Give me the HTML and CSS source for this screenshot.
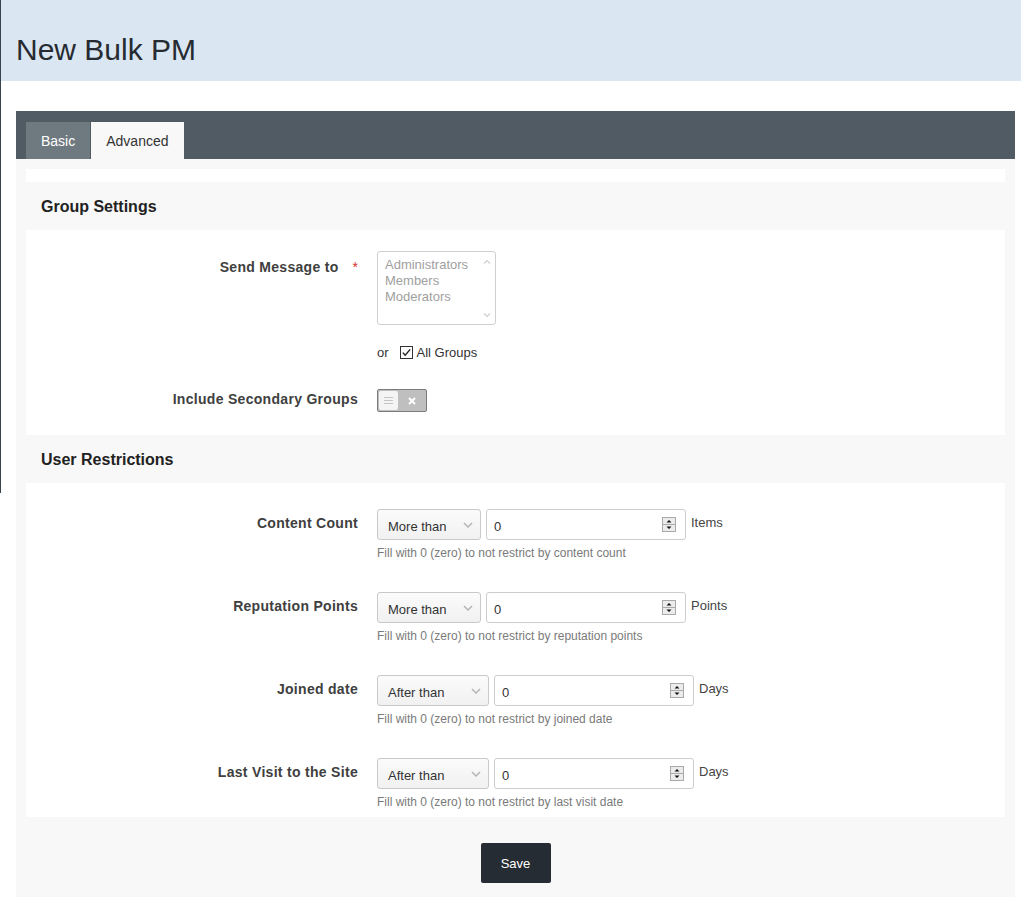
FILE: index.html
```html
<!DOCTYPE html>
<html lang="en">
<head>
<meta charset="utf-8">
<title>New Bulk PM</title>
<link rel="stylesheet" href="styles.css">
</head>
<body>
<div class="shell">
  <div class="rail"></div>
  <div class="main">
    <header class="page-head">
      <h1 class="page-title">New Bulk PM</h1>
    </header>

    <section class="panel">
      <div class="tabbar">
        <button class="tab">Basic</button>
        <button class="tab active">Advanced</button>
      </div>

      <div class="panel-body">
        <div class="strip"></div>

        <h2 class="sec-title">Group Settings</h2>
        <div class="sec sec-groups">
          <div class="row">
            <div class="lbl lbl-top">Send Message to<span class="req">*</span></div>
            <div class="ctrl">
              <div class="multiselect">
                <div class="ms-opts">
                  <div>Administrators</div>
                  <div>Members</div>
                  <div>Moderators</div>
                </div>
                <div class="ms-bar">
                  <svg width="8" height="5" viewBox="0 0 8 5"><path d="M1 4.5 L4 1.5 L7 4.5" fill="none" stroke="#cfcfcf" stroke-width="1.2"/></svg>
                  <svg width="8" height="5" viewBox="0 0 8 5"><path d="M1 0.5 L4 3.5 L7 0.5" fill="none" stroke="#cfcfcf" stroke-width="1.2"/></svg>
                </div>
              </div>
              <div class="or-line">
                <span class="or">or</span>
                <label class="chk">
                  <svg width="13" height="13" viewBox="0 0 13 13"><rect x="0.5" y="0.5" width="12" height="12" fill="#fff" stroke="#333"/><path d="M2.8 6.6 L5.2 9.2 L10.2 3.4" fill="none" stroke="#222" stroke-width="1.4"/></svg>
                  <span>All Groups</span>
                </label>
              </div>
            </div>
          </div>

          <div class="row row-gap">
            <div class="lbl">Include Secondary Groups</div>
            <div class="ctrl">
              <div class="toggle">
                <span class="knob">
                  <svg width="9" height="7" viewBox="0 0 9 7"><path d="M0 0.5 H9 M0 3.5 H9 M0 6.5 H9" stroke="#c4c4c4" stroke-width="1"/></svg>
                </span>
                <span class="toggle-off">
                  <svg width="8" height="8" viewBox="0 0 8 8"><path d="M1 1 L7 7 M7 1 L1 7" stroke="#fff" stroke-width="2"/></svg>
                </span>
              </div>
            </div>
          </div>
        </div>

        <h2 class="sec-title">User Restrictions</h2>
        <div class="sec sec-users">
          <div class="row">
            <div class="lbl lbl-field">Content Count</div>
            <div class="ctrl">
              <div class="ctrl-line">
                <div class="select sel-more"><span>More than</span>
                  <svg width="10" height="6" viewBox="0 0 10 6"><path d="M1 1 L5 5 L9 1" fill="none" stroke="#b5b5b5" stroke-width="1.5"/></svg>
                </div>
                <div class="num"><span>0</span>
                  <svg class="spin" width="14" height="15" viewBox="0 0 14 15"><rect x="0.5" y="0.5" width="13" height="14" fill="#ececec" stroke="#a9a9a9"/><path d="M1 7.5 H13" stroke="#a9a9a9"/><path d="M4.5 5.5 L7 3 L9.5 5.5 Z M4.5 9.5 L7 12 L9.5 9.5 Z" fill="#111"/></svg>
                </div>
                <span class="unit">Items</span>
              </div>
              <div class="help">Fill with 0 (zero) to not restrict by content count</div>
            </div>
          </div>

          <div class="row row-next">
            <div class="lbl lbl-field">Reputation Points</div>
            <div class="ctrl">
              <div class="ctrl-line">
                <div class="select sel-more"><span>More than</span>
                  <svg width="10" height="6" viewBox="0 0 10 6"><path d="M1 1 L5 5 L9 1" fill="none" stroke="#b5b5b5" stroke-width="1.5"/></svg>
                </div>
                <div class="num"><span>0</span>
                  <svg class="spin" width="14" height="15" viewBox="0 0 14 15"><rect x="0.5" y="0.5" width="13" height="14" fill="#ececec" stroke="#a9a9a9"/><path d="M1 7.5 H13" stroke="#a9a9a9"/><path d="M4.5 5.5 L7 3 L9.5 5.5 Z M4.5 9.5 L7 12 L9.5 9.5 Z" fill="#111"/></svg>
                </div>
                <span class="unit">Points</span>
              </div>
              <div class="help">Fill with 0 (zero) to not restrict by reputation points</div>
            </div>
          </div>

          <div class="row row-next">
            <div class="lbl lbl-field">Joined date</div>
            <div class="ctrl">
              <div class="ctrl-line">
                <div class="select sel-after"><span>After than</span>
                  <svg width="10" height="6" viewBox="0 0 10 6"><path d="M1 1 L5 5 L9 1" fill="none" stroke="#b5b5b5" stroke-width="1.5"/></svg>
                </div>
                <div class="num"><span>0</span>
                  <svg class="spin" width="14" height="15" viewBox="0 0 14 15"><rect x="0.5" y="0.5" width="13" height="14" fill="#ececec" stroke="#a9a9a9"/><path d="M1 7.5 H13" stroke="#a9a9a9"/><path d="M4.5 5.5 L7 3 L9.5 5.5 Z M4.5 9.5 L7 12 L9.5 9.5 Z" fill="#111"/></svg>
                </div>
                <span class="unit">Days</span>
              </div>
              <div class="help">Fill with 0 (zero) to not restrict by joined date</div>
            </div>
          </div>

          <div class="row row-next">
            <div class="lbl lbl-field">Last Visit to the Site</div>
            <div class="ctrl">
              <div class="ctrl-line">
                <div class="select sel-after"><span>After than</span>
                  <svg width="10" height="6" viewBox="0 0 10 6"><path d="M1 1 L5 5 L9 1" fill="none" stroke="#b5b5b5" stroke-width="1.5"/></svg>
                </div>
                <div class="num"><span>0</span>
                  <svg class="spin" width="14" height="15" viewBox="0 0 14 15"><rect x="0.5" y="0.5" width="13" height="14" fill="#ececec" stroke="#a9a9a9"/><path d="M1 7.5 H13" stroke="#a9a9a9"/><path d="M4.5 5.5 L7 3 L9.5 5.5 Z M4.5 9.5 L7 12 L9.5 9.5 Z" fill="#111"/></svg>
                </div>
                <span class="unit">Days</span>
              </div>
              <div class="help">Fill with 0 (zero) to not restrict by last visit date</div>
            </div>
          </div>
        </div>
      </div>

      <div class="panel-foot">
        <button class="btn-save">Save</button>
      </div>
    </section>
  </div>
</div>
</body>
</html>
```

FILE: styles.css
```css
* { box-sizing: border-box; }

html, body {
  margin: 0;
  padding: 0;
  background: #fff;
}

body {
  font-family: "Liberation Sans", Arial, sans-serif;
  font-size: 13px;
  color: #333;
}

.shell {
  display: flex;
  align-items: flex-start;
}

.rail {
  flex: none;
  width: 1px;
  height: 493px;
  background: #39434c;
}

.main {
  flex: 1;
  min-width: 0;
  padding-right: 6px;
}

.page-head {
  height: 81px;
  background: #dae6f2;
  padding: 32px 0 0 15px;
}

.page-title {
  margin: 0;
  font-size: 30px;
  line-height: 36px;
  font-weight: normal;
  color: #262b31;
}

.panel {
  margin: 30px 6px 0 15px;
  background: #f8f8f8;
}

.tabbar {
  display: flex;
  height: 48px;
  padding: 11px 10px 0;
  background: #505b63;
}

.tab {
  height: 37px;
  margin: 0 1px 0 0;
  padding: 2px 15px 0;
  border: 0;
  font-family: "Liberation Sans", Arial, sans-serif;
  font-size: 14px;
  line-height: 35px;
  color: #fff;
  background: #6f7a80;
}

.tab.active {
  color: #333;
  background: #f8f8f8;
}

.panel-body {
  padding: 10px 10px 0;
}

.strip {
  height: 13px;
  background: #fff;
}

.sec-title {
  margin: 0;
  height: 48px;
  padding-left: 15px;
  font-size: 16px;
  line-height: 49px;
  font-weight: bold;
  color: #222;
}

.sec {
  background: #fff;
}

.sec-groups {
  padding: 21px 0 23px;
}

.sec-users {
  padding: 26px 0 6px;
}

.row {
  display: grid;
  grid-template-columns: 341px 1fr;
  column-gap: 10px;
}

.row-gap {
  margin-top: 27px;
}

.row-next {
  margin-top: 30px;
}

.lbl {
  padding-right: 9px;
  text-align: right;
  font-size: 14px;
  line-height: 20px;
  font-weight: bold;
  letter-spacing: 0.3px;
  color: #404040;
}

.lbl-top {
  padding-top: 6px;
}

.lbl-field {
  padding-top: 4px;
}

.req {
  margin-left: 14px;
  color: #d2322d;
  font-weight: normal;
  letter-spacing: 0;
}

/* multi select */
.multiselect {
  display: flex;
  width: 119px;
  height: 74px;
  border: 1px solid #cfcfcf;
  border-radius: 3px;
  background: #fff;
}

.ms-opts {
  flex: 1;
  padding: 5px 0 0 7px;
  font-size: 13px;
  line-height: 16px;
  color: #a0a0a0;
}

.ms-bar {
  display: flex;
  flex-direction: column;
  justify-content: space-between;
  align-items: center;
  width: 17px;
  padding: 7px 0 6px;
}

.ms-bar svg {
  display: block;
}

.or-line {
  display: flex;
  align-items: center;
  gap: 11px;
  margin-top: 17px;
  height: 20px;
  font-size: 13px;
  color: #333;
}

.chk {
  display: flex;
  align-items: center;
  gap: 4px;
}

.chk svg {
  display: block;
}

/* toggle */
.toggle {
  display: flex;
  width: 50px;
  height: 23px;
  padding: 1px;
  border: 1px solid #7c7c7c;
  border-radius: 2px;
  background: #bfbfbf;
}

.knob {
  display: flex;
  align-items: center;
  justify-content: center;
  width: 19px;
  border-radius: 2px;
  background: #f4f4f4;
}

.toggle-off {
  flex: 1;
  display: flex;
  align-items: center;
  justify-content: center;
}

.toggle svg {
  display: block;
}

/* fields */
.ctrl-line {
  display: flex;
  align-items: flex-start;
  gap: 5px;
  height: 31px;
}

.select {
  display: flex;
  align-items: center;
  justify-content: space-between;
  height: 31px;
  padding: 3px 7px 0 10px;
  border: 1px solid #c9c9c9;
  border-radius: 3px;
  background: linear-gradient(#fbfbfb, #f1f1f1);
  font-size: 13px;
  line-height: 15px;
  color: #333;
}

.select svg {
  display: block;
  margin-top: -3px;
}

.sel-more {
  width: 104px;
}

.sel-after {
  width: 112px;
}

.num {
  display: flex;
  align-items: center;
  justify-content: space-between;
  width: 200px;
  height: 31px;
  padding: 3px 9px 0 7px;
  border: 1px solid #cdcdcd;
  border-radius: 3px;
  background: #fff;
  font-size: 13px;
  line-height: 15px;
  color: #333;
}

.spin {
  display: block;
  margin-top: -3px;
}

.unit {
  padding-top: 5px;
  font-size: 13px;
  line-height: 18px;
  color: #444;
}

.help {
  margin-top: 4px;
  font-size: 12px;
  line-height: 18px;
  color: #7a7a7a;
}

.panel-foot {
  padding: 26px 0 14px;
  text-align: center;
}

.btn-save {
  width: 70px;
  height: 40px;
  border: 0;
  border-radius: 2px;
  background: #262c33;
  color: #fff;
  font-family: "Liberation Sans", Arial, sans-serif;
  font-size: 13px;
}
```
